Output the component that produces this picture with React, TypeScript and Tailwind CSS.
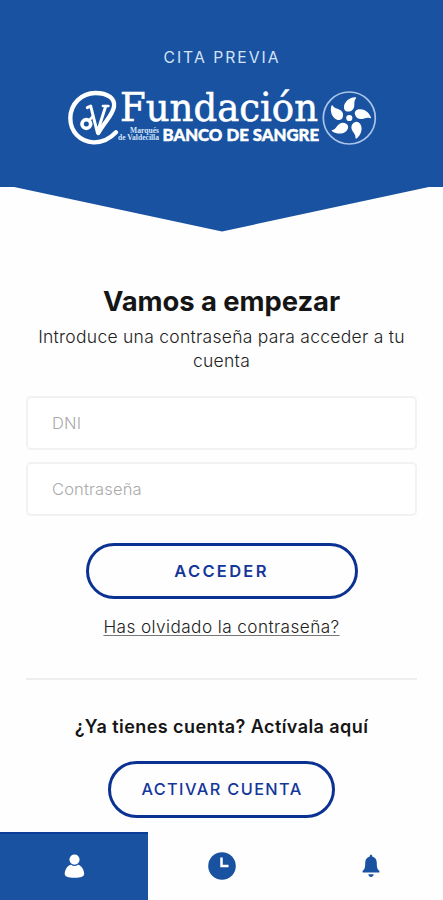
const BLUE = "#1852a1";

function Logo() {
  return (
    <svg width="320" height="64" viewBox="62 86 320 64" fill="#fff" role="img" aria-label="Fundación Banco de Sangre">
      <g transform="translate(60 80) scale(.33333)" fill="none" stroke="#fff" strokeLinecap="round" strokeLinejoin="round">
        <path d="M168 157C149 177 126 188 100 187C60 185 31 155 31 115C31 71 66 39 106 39C144 39 166 56 162 80C158 106 135 124 115 159" strokeWidth="13" />
        <ellipse cx="79" cy="132" rx="13" ry="13" strokeWidth="11" />
        <path d="M82 83L92 78L112 157L137 79" strokeWidth="9" />
        <path d="M129 78H145M88 121L99 108" strokeWidth="8" />
      </g>
      <text x="120" y="121" fontFamily="'DejaVu Serif', serif" fontSize="38.5" textLength="198" lengthAdjust="spacingAndGlyphs" stroke="#fff" strokeWidth=".6">Fundación</text>
      <text x="130" y="133" fontFamily="'Liberation Serif', serif" fontWeight="700" fontSize="7.8" textLength="29" lengthAdjust="spacingAndGlyphs" fill="#d5e3f8">Marqués</text>
      <text x="118" y="140" fontFamily="'Liberation Serif', serif" fontWeight="700" fontSize="7.8" textLength="41" lengthAdjust="spacingAndGlyphs" fill="#d5e3f8">de Valdecilla</text>
      <text x="162.5" y="140.8" fontFamily="Lato, sans-serif" fontWeight="900" fontSize="17.5" textLength="156.500" lengthAdjust="spacingAndGlyphs" stroke="#fff" strokeWidth=".5">BANCO DE SANGRE</text>
      <circle cx="349.3" cy="118" r="26" fill="none" stroke="#a9c4e8" strokeWidth="1.7" />
      <circle cx="349.3" cy="118" r="3.1" />
      {[0, 72, 144, 216, 288].map((angle) => (
        <path
          key={angle}
          transform={`rotate(${angle} 349.3 118)`}
          d="M355 97.200C349.500 97.500 344.500 101.500 344 106.200C343.700 109.500 345.300 111.500 348 111.500C351.800 111.500 353.700 109.300 354.200 106.200C354.700 103.300 353.700 101 356 98.300C356.500 97.500 356 97.200 355 97.200Z"
        />
      ))}
    </svg>
  );
}

function Field({ placeholder, type }: { placeholder: string; type: string }) {
  return (
    <input
      type={type}
      placeholder={placeholder}
      className="block h-[54px] w-full rounded-[5px] border-2 border-[#f2f2f2] bg-white px-6 text-[16.5px] font-light tracking-[0.15px] text-[#222] placeholder:text-[#aaa]"
    />
  );
}

export default function App() {
  return (
    <div className="flex h-[900px] w-[443px] flex-col overflow-hidden bg-[#fefefe] font-['Inter',sans-serif] text-[#151515]">
      <header className="relative flex h-[187px] shrink-0 flex-col items-center bg-[#1852a1]">
        <div className="mt-[46px] h-6 pl-[1px] text-[15.7px] leading-6 tracking-[2px] text-[#d5e3f8]">CITA PREVIA</div>
        <div className="mt-4">
          <Logo />
        </div>
        <svg className="absolute top-[186px] left-0" width="443" height="46" viewBox="0 0 443 46" fill={BLUE}>
          <path d="M13 .8H430L222 45.500Z" />
        </svg>
      </header>

      <main className="flex flex-1 flex-col items-center px-[26px] pt-[96px]">
        <h1 className="h-9 text-[27.4px] leading-9 font-bold tracking-[-0.05px]">Vamos a empezar</h1>
        <p className="mt-[6px] text-center text-[17.5px] leading-[23.5px] font-light tracking-[0.27px] text-[#222]">
          Introduce una contraseña para acceder a tu
          <br />
          cuenta
        </p>
        <form className="mt-6 flex w-full flex-col items-center gap-3" onSubmit={(e) => e.preventDefault()}>
          <Field type="text" placeholder="DNI" />
          <Field type="password" placeholder="Contraseña" />
          <button className="mt-[15px] h-[56px] w-[272px] rounded-full border-3 border-[#0b3292] text-[16.5px] font-semibold tracking-[2.3px] text-[#15379a]">
            ACCEDER
          </button>
        </form>
        <a href="#" className="mt-4 text-[17.2px] leading-6 font-light tracking-[0.42px] text-[#222] underline decoration-[#777] underline-offset-2">
          Has olvidado la contraseña?
        </a>
        <hr className="mt-[39px] w-full border-t-2 border-[#eeeeee]" />
        <h2 className="mt-[35px] text-[18px] leading-6 font-semibold tracking-[0.43px]">¿Ya tienes cuenta? Actívala aquí</h2>
        <button className="mt-[22px] h-[57px] w-[227px] rounded-full border-3 border-[#0b3292] pl-[1px] text-[16.3px] font-medium tracking-[1.4px] text-[#15379a]">
          ACTIVAR CUENTA
        </button>
      </main>

      <nav className="grid h-[68px] shrink-0 grid-cols-[148px_148px_147px]">
        <button className="flex items-center justify-center border-t-2 border-[#0b3d98] bg-[#1852a1] pb-[2px]" aria-label="Cuenta">
          <svg width="22" height="26" viewBox="0 0 22 26" fill="#fff">
            <circle cx="11.500" cy="6.600" r="5.100" />
            <path d="M1.700 20.500C2.300 15.300 5.400 12.200 8 11.800Q11.500 14.200 15 11.800C18 12.500 20.700 15.500 21.200 20.500C21.300 23.500 18 24.700 11.500 24.700S1.500 23.500 1.700 20.500Z" />
          </svg>
        </button>
        <button className="flex items-center justify-center" aria-label="Citas">
          <svg width="28" height="28" viewBox="0 0 28 28">
            <circle cx="14" cy="14" r="13.800" fill={BLUE} />
            <path d="M13.500 5.500V14H20.500" fill="none" stroke="#fff" strokeWidth="2.500" />
          </svg>
        </button>
        <button className="flex items-center justify-center pl-[2px]" aria-label="Avisos">
          <svg width="18" height="24" viewBox="0 0 18 24" fill={BLUE}>
            <path d="M9 .8C8.200.8 7.700 1.500 7.700 2.400C4.800 3.200 3.200 5.700 3.200 9C3.200 14 2.600 15.400.6 16.700V18.600H17.400V16.700C15.400 15.400 14.800 14 14.800 9C14.800 5.700 13.200 3.200 10.300 2.400C10.300 1.500 9.800.8 9 .8Z" />
            <path d="M6.300 20.300H11.700C11.300 22.100 10.400 23 9 23S6.700 22.100 6.300 20.300Z" />
          </svg>
        </button>
      </nav>
    </div>
  );
}
